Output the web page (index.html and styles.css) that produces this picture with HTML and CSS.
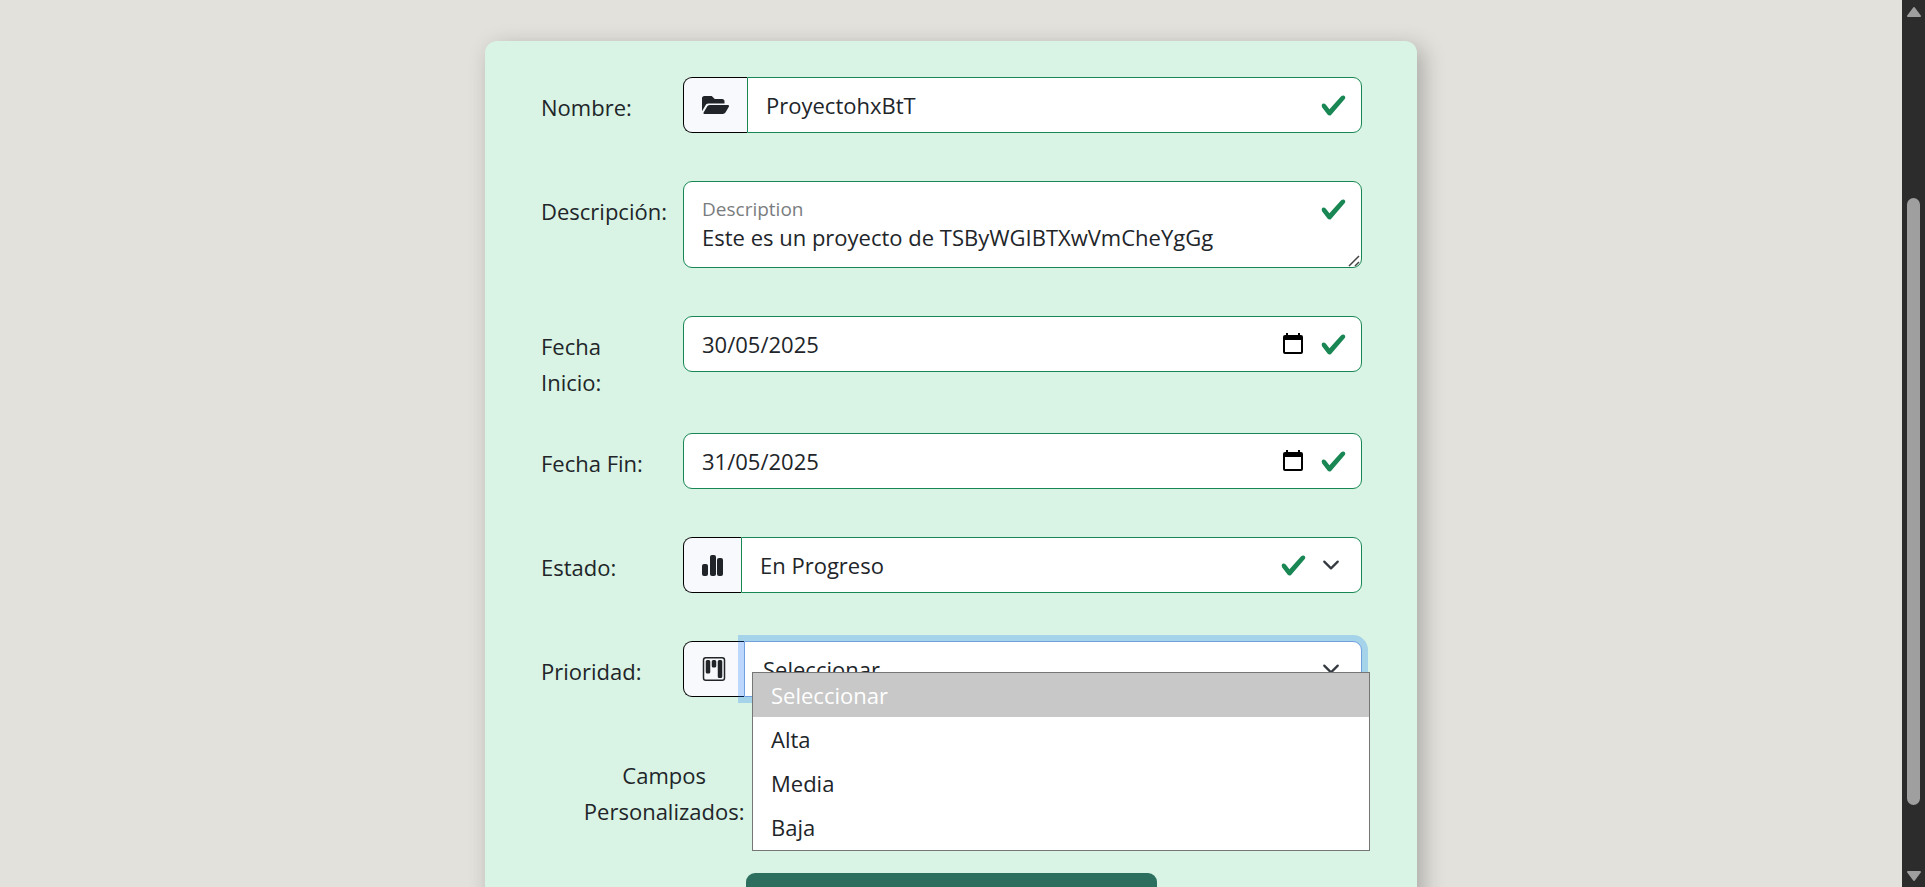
FILE: index.html
```html
<!DOCTYPE html>
<html lang="es">
<head>
<meta charset="utf-8">
<meta name="viewport" content="width=device-width, initial-scale=1">
<title>Proyecto</title>
<link rel="stylesheet" href="styles.css">
</head>
<body>
<svg class="defs" aria-hidden="true">
  <symbol id="check" viewBox="0 0 8 8"><path fill="#198754" d="M2.3 6.73.6 4.53c-.4-1.04.46-1.4 1.1-.8l1.1 1.4 3.4-3.8c.6-.63 1.6-.27 1.2.7l-4 4.6c-.43.5-.8.4-1.1.1z"/></symbol>
  <symbol id="chevron" viewBox="0 0 16 16"><path fill="none" stroke="#343a40" stroke-linecap="round" stroke-linejoin="round" stroke-width="2" d="m2 5 6 6 6-6"/></symbol>
  <symbol id="calendar" viewBox="0 0 24 24"><path fill="#000" fill-rule="evenodd" d="M5 1h2v2h10V1h2v2h1a2 2 0 0 1 2 2v15a2 2 0 0 1-2 2H4a2 2 0 0 1-2-2V5a2 2 0 0 1 2-2h1zM4 8v12h16V8z"/></symbol>
</svg>
<div class="window">
  <main class="page">
    <form class="card">
      <div class="row">
        <label class="label" for="nombre">Nombre:</label>
        <div class="group">
          <span class="addon"><svg width="27" height="24" viewBox="0 0 576 512" aria-hidden="true"><path fill="currentColor" d="M573 292 500 417c-11 20-34 31-56 31H52c-16 0-26-18-18-32l73-124c12-20 33-36 56-36h392c17 0 26 21 18 36zM163 224h317v-48c0-27-22-48-48-48H272l-64-64H48c-26 0-48 21-48 48v278l79-135c18-31 49-31 84-31z"/></svg></span>
          <div class="field joined">
            <input class="control" id="nombre" type="text" value="ProyectohxBtT">
            <span class="marks"><svg class="check"><use href="#check"/></svg></span>
          </div>
        </div>
      </div>

      <div class="row">
        <label class="label" for="descripcion">Descripción:</label>
        <div class="group">
          <div class="field">
            <label class="floating" for="descripcion">Description</label>
            <textarea class="control area" id="descripcion" rows="1">Este es un proyecto de TSByWGIBTXwVmCheYgGg</textarea>
            <span class="marks"><svg class="check"><use href="#check"/></svg></span>
            <svg class="grip" viewBox="0 0 12 12" aria-hidden="true"><path d="M1 11 11 1M7 11l4-4" fill="none" stroke="#444" stroke-width="1.500"/></svg>
          </div>
        </div>
      </div>

      <div class="row">
        <label class="label" for="inicio">Fecha Inicio:</label>
        <div class="group">
          <div class="field">
            <input class="control" id="inicio" type="text" value="30/05/2025">
            <span class="marks"><button class="pick" type="button" aria-label="Abrir calendario"><svg class="calendar"><use href="#calendar"/></svg></button><svg class="check"><use href="#check"/></svg></span>
          </div>
        </div>
      </div>

      <div class="row">
        <label class="label" for="fin">Fecha Fin:</label>
        <div class="group">
          <div class="field">
            <input class="control" id="fin" type="text" value="31/05/2025">
            <span class="marks"><button class="pick" type="button" aria-label="Abrir calendario"><svg class="calendar"><use href="#calendar"/></svg></button><svg class="check"><use href="#check"/></svg></span>
          </div>
        </div>
      </div>

      <div class="row">
        <label class="label" for="estado">Estado:</label>
        <div class="group">
          <span class="addon"><svg width="21" height="24" viewBox="0 0 21 24" aria-hidden="true"><g fill="currentColor"><rect x="0" y="11" width="6" height="12" rx="2"/><rect x="8" y="2" width="6" height="21" rx="2"/><rect x="15" y="5" width="6" height="18" rx="2"/></g></svg></span>
          <div class="field joined">
            <select class="control" id="estado"><option>En Progreso</option></select>
            <span class="marks select-marks"><svg class="check"><use href="#check"/></svg><svg class="chevron"><use href="#chevron"/></svg></span>
          </div>
        </div>
      </div>

      <div class="row">
        <label class="label" for="prioridad">Prioridad:</label>
        <div class="group">
          <span class="addon"><svg width="24" height="24" viewBox="0 0 16 16" aria-hidden="true"><path fill="currentColor" d="M13.500 1a1 1 0 0 1 1 1v12a1 1 0 0 1-1 1h-11a1 1 0 0 1-1-1V2a1 1 0 0 1 1-1zm-11-1a2 2 0 0 0-2 2v12a2 2 0 0 0 2 2h11a2 2 0 0 0 2-2V2a2 2 0 0 0-2-2z"/><path fill="currentColor" d="M6.500 3a1 1 0 0 1 1-1h1a1 1 0 0 1 1 1v3a1 1 0 0 1-1 1h-1a1 1 0 0 1-1-1zm-4 0a1 1 0 0 1 1-1h1a1 1 0 0 1 1 1v7a1 1 0 0 1-1 1h-1a1 1 0 0 1-1-1zm8 0a1 1 0 0 1 1-1h1a1 1 0 0 1 1 1v10a1 1 0 0 1-1 1h-1a1 1 0 0 1-1-1z"/></svg></span>
          <div class="field joined open">
            <select class="control" id="prioridad"><option>Seleccionar</option><option>Alta</option><option>Media</option><option>Baja</option></select>
            <span class="marks select-marks"><svg class="chevron"><use href="#chevron"/></svg></span>
            <ul class="menu" role="listbox" aria-label="Prioridad">
              <li class="option current" role="option" aria-selected="true">Seleccionar</li>
              <li class="option" role="option">Alta</li>
              <li class="option" role="option">Media</li>
              <li class="option" role="option">Baja</li>
            </ul>
          </div>
        </div>
      </div>

      <div class="custom">Campos<br>Personalizados:</div>
      <button class="submit" type="submit" aria-label="Guardar"></button>
    </form>
  </main>
  <div class="scrollbar" aria-hidden="true">
    <svg width="16" height="12" viewBox="0 0 16 12"><path class="arrow" d="M8 2 14 10H2z"/></svg>
    <div class="track"><div class="thumb"></div></div>
    <svg width="16" height="12" viewBox="0 0 16 12"><path class="arrow" d="M8 10 14 2H2z"/></svg>
  </div>
</div>
</body>
</html>
```

FILE: styles.css
```css
* { box-sizing: border-box; }

body {
  margin: 0;
  background: #e2e1dc;
  color: #212529;
  font-family: "Open Sans", "Noto Sans", sans-serif;
  font-size: 22px;
  line-height: 36px;
}

.defs { display: none; }

.window {
  display: flex;
  height: 100vh;
  overflow: hidden;
}

.page {
  flex: 1;
  padding-top: 41px;
  overflow: hidden;
}

.card {
  width: 49%;
  margin: 0 auto;
  padding: 36px 55px 36px 56px;
  background: #d9f4e4;
  border-radius: 12px;
  box-shadow: 6px 6px 22px rgba(0, 0, 0, 0.25);
}

.row {
  display: grid;
  grid-template-columns: 118px minmax(0, 1fr);
  column-gap: 24px;
  margin-bottom: 24px;
}

.label { padding: 12px 0 9px; }

.group {
  display: flex;
  align-items: flex-start;
  padding-bottom: 24px;
}

.addon {
  display: flex;
  align-items: center;
  height: 56px;
  padding: 0 18px;
  background: #f8f9fc;
  border: 1px solid #000;
  border-right: 0;
  border-radius: 9px 0 0 9px;
}

.addon svg { display: block; }

.field {
  position: relative;
  flex: 1;
  min-width: 0;
}

.control {
  display: block;
  width: 100%;
  height: 56px;
  margin: 0;
  padding: 0 18px;
  appearance: none;
  background: #fff;
  color: inherit;
  border: 1px solid #198754;
  border-radius: 9px;
  outline: 0;
  font: inherit;
}

.joined .control { border-radius: 0 9px 9px 0; }

.area {
  height: 87px;
  padding-top: 37px;
  resize: none;
  overflow: hidden;
}

.floating {
  position: absolute;
  top: 10px;
  left: 19px;
  color: #7a7d80;
  font-size: 19px;
}

.marks {
  position: absolute;
  top: 0;
  right: 15px;
  display: flex;
  align-items: center;
  gap: 15px;
  height: 56px;
}

.select-marks {
  right: 19px;
  gap: 12px;
  pointer-events: none;
}

.check { width: 27px; height: 27px; }
.chevron { width: 24px; height: 18px; }
.calendar { display: block; width: 24px; height: 24px; }

.pick {
  padding: 0;
  background: none;
  border: 0;
}

.grip {
  position: absolute;
  right: 2px;
  bottom: 1px;
  width: 12px;
  height: 12px;
}

.open .control {
  border-color: #70a0e0;
  box-shadow: 0 0 0 6px rgba(13, 110, 253, 0.25);
}

.menu {
  position: absolute;
  top: 31px;
  left: 8px;
  right: -8px;
  z-index: 2;
  margin: 0;
  padding: 0 0 1px;
  list-style: none;
  background: #fff;
  border: 1px solid #767676;
}

.option {
  padding: 0 18px;
  line-height: 44px;
}

.current {
  background: #c8c8c8;
  color: #fff;
}

.custom {
  width: 30%;
  padding: 12px 0 9px;
  text-align: center;
}

.submit {
  display: block;
  width: 50%;
  height: 56px;
  margin: 35px auto 0;
  background: #2d6f5f;
  border: 0;
  border-radius: 9px;
}

.scrollbar {
  display: flex;
  flex-direction: column;
  align-items: center;
  width: 23px;
  padding: 6px 0 5px;
  background: #2c2c2c;
}

.arrow {
  fill: #9f9f9f;
  stroke: #9f9f9f;
  stroke-width: 2;
  stroke-linejoin: round;
}

.track {
  display: grid;
  flex: 1;
  grid-template-rows: 180fr 607fr 65fr;
}

.thumb {
  grid-row: 2;
  width: 13px;
  background: #9f9f9f;
  border-radius: 7px;
}
```
